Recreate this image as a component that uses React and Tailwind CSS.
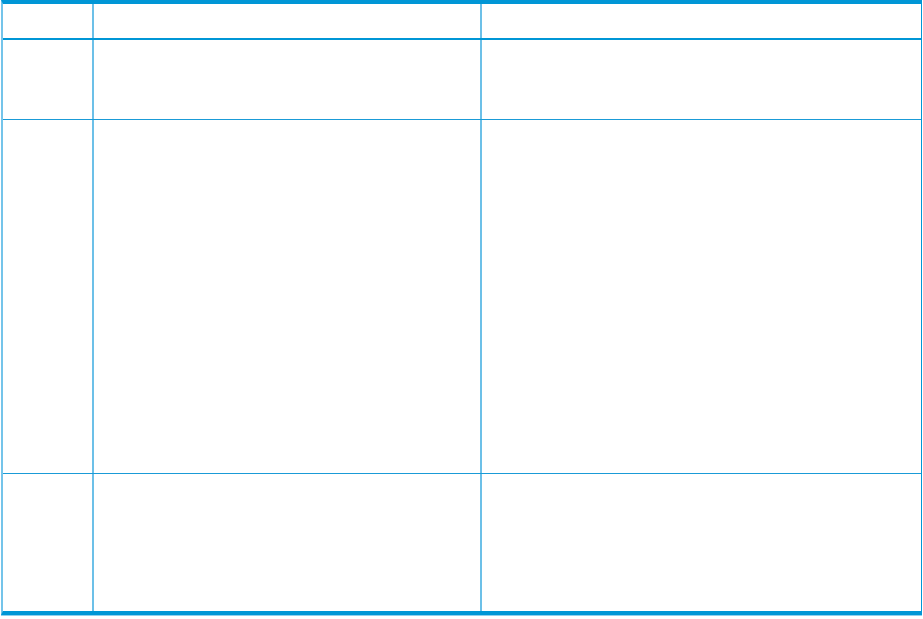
import React from 'react';

const rows = [
  { h: 'h-[36px]', line: 'border-b-2 border-[#0096d6]' },
  { h: 'h-[80px]', line: 'border-b border-[#1a9bd7]' },
  { h: 'h-[354px]', line: 'border-b border-[#1a9bd7]' },
  { h: 'h-[137px]', line: '' },
];

const App = () => {
  return (
    <div className="w-[923px] h-[619px] bg-white font-['Liberation_Sans',sans-serif]">
      <div className="ml-px w-[921px] border-l-2 border-l-[#74c4ea] border-r border-r-[#0096d6] border-t-4 border-t-[#0096d6] border-b-4 border-b-[#0096d6]">
        {rows.map((row, i) => (
          <div key={i} className={`grid grid-cols-[91px_388px_1fr] ${row.h} ${row.line}`}>
            <div className="border-r-2 border-[#6cc0e8]"></div>
            <div className="border-r-2 border-[#6cc0e8]"></div>
            <div></div>
          </div>
        ))}
      </div>
      <div className="ml-px w-[921px] h-px bg-[#8fd0ee]"></div>
    </div>
  );
};

export default App;
